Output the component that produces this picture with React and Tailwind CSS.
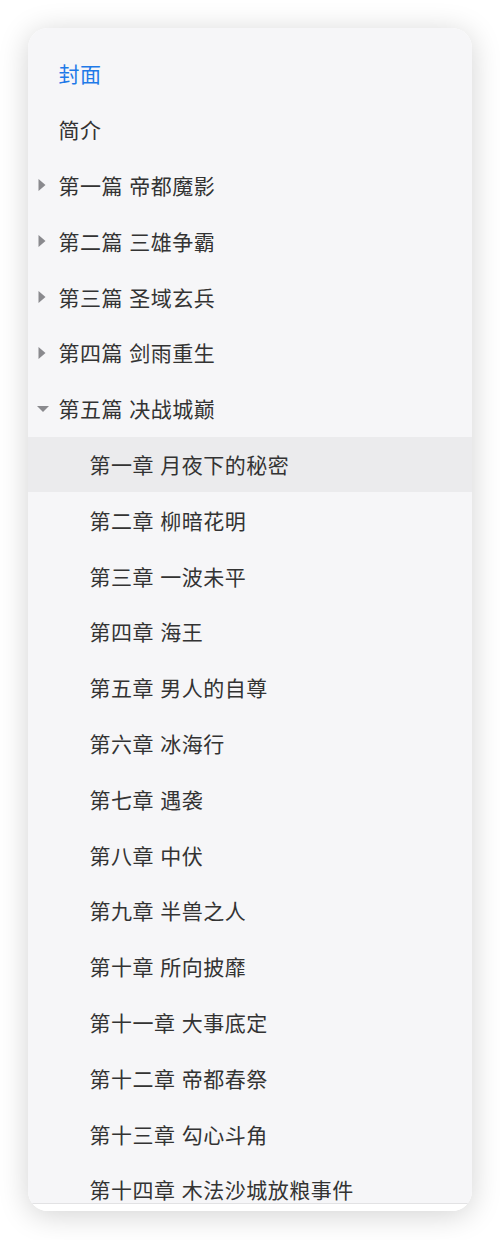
const volumes = ['第一篇 帝都魔影', '第二篇 三雄争霸', '第三篇 圣域玄兵', '第四篇 剑雨重生'];

const chapters = [
  '第一章 月夜下的秘密',
  '第二章 柳暗花明',
  '第三章 一波未平',
  '第四章 海王',
  '第五章 男人的自尊',
  '第六章 冰海行',
  '第七章 遇袭',
  '第八章 中伏',
  '第九章 半兽之人',
  '第十章 所向披靡',
  '第十一章 大事底定',
  '第十二章 帝都春祭',
  '第十三章 勾心斗角',
  '第十四章 木法沙城放粮事件',
];

const Caret = ({ open }) =>
  open ? (
    <svg width="12" height="7" viewBox="0 0 12 7" className="absolute left-[9px] top-1/2 -translate-y-1/2">
      <path d="M0 0.5h12L6 6.5z" fill="#8a8a8e" />
    </svg>
  ) : (
    <svg width="8" height="12" viewBox="0 0 8 12" className="absolute left-[10px] top-1/2 -translate-y-1/2">
      <path d="M0.5 0v12L7.5 6z" fill="#8a8a8e" />
    </svg>
  );

const Row = ({ children, indent = false, active = false, highlight = false, caret }) => (
  <div
    className={`relative flex h-[55.8px] shrink-0 items-center ${indent ? 'pl-[61.5px]' : 'pl-[30.5px]'} ${
      highlight ? 'bg-[#ebebed]' : ''
    }`}
  >
    {caret !== undefined && <Caret open={caret} />}
    <span
      className={`whitespace-pre text-[21px] leading-none tracking-[0.5px] [word-spacing:1px] ${
        active ? 'text-[#1f7ae8]' : 'text-[#333333]'
      }`}
    >
      {children}
    </span>
  </div>
);

export default function App() {
  return (
    <div
      className="h-[1240px] w-[500px] bg-white pl-[28px] pt-[28px]"
      style={{ fontFamily: '"Noto Sans CJK SC", "Noto Sans", sans-serif' }}
    >
      <div className="flex h-[1183px] w-[444px] flex-col overflow-hidden rounded-[20px] bg-white shadow-[0_4px_30px_rgba(0,0,0,0.18)]">
        <div className="flex flex-1 flex-col overflow-hidden border-b border-[#e2e2e4] bg-[#f6f6f8] pt-[18px]">
          <Row active>封面</Row>
          <Row>简介</Row>
          {volumes.map((v) => (
            <Row key={v} caret={false}>
              {v}
            </Row>
          ))}
          <Row caret={true}>第五篇 决战城巅</Row>
          {chapters.map((c, i) => (
            <Row key={c} indent highlight={i === 0}>
              {c}
            </Row>
          ))}
        </div>
        <div className="h-[7px] shrink-0 bg-white" />
      </div>
    </div>
  );
}
